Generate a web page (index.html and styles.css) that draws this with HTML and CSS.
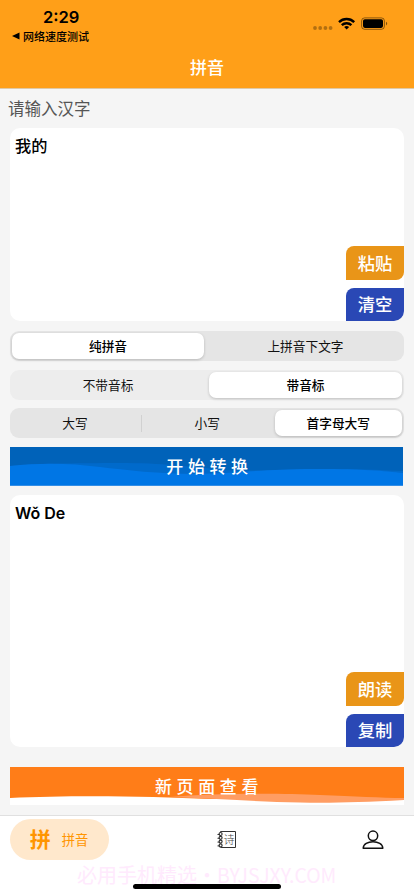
FILE: index.html
```html
<!DOCTYPE html>
<html lang="zh-CN">
<head>
<meta charset="utf-8">
<title>拼音</title>
<link rel="stylesheet" href="styles.css">
</head>
<body>
<div class="app">
  <header class="header">
    <div class="status">
      <div class="status-left">
        <div class="time">2:29</div>
        <div class="back"><svg width="8" height="8" viewBox="0 0 8 8"><path d="M0 4L7.5 .6V7.4Z"/></svg><span>网络速度测试</span></div>
      </div>
      <div class="status-right">
        <svg width="76" height="14" viewBox="0 0 76 14">
          <g fill="#000" fill-opacity=".3"><circle cx="2" cy="11" r="1.9"/><circle cx="7.2" cy="11" r="1.9"/><circle cx="12.4" cy="11" r="1.9"/><circle cx="17.6" cy="11" r="1.9"/></g>
          <g fill="none" stroke="#000" stroke-width="2.4"><path d="M26 5.100a11 11 0 0 1 15.200 0"/><path d="M28.800 8.200a7 7 0 0 1 9.600 0"/></g>
          <path d="M33.600 12.600l-2.500-2.500a3.800 3.800 0 0 1 5 0z"/>
          <rect x="48.600" y=".9" width="22.800" height="11.400" rx="3" fill="none" stroke="#000" stroke-opacity=".5" stroke-width=".9"/>
          <rect x="50" y="2.300" width="20" height="8.600" rx="1.800"/>
          <path d="M73 4.800c1.600.6 1.600 3 0 3.600z" fill-opacity=".5"/>
        </svg>
      </div>
    </div>
    <h1 class="title">拼音</h1>
  </header>

  <main class="main">
    <div class="label">请输入汉字</div>
    <section class="box box-in">
      <div class="box-text">我的</div>
      <div class="side"><div class="chip amber"><span>粘贴</span></div><div class="chip blue"><span>清空</span></div></div>
    </section>

    <div class="segments">
      <div class="seg first"><div class="opt on">纯拼音</div><div class="opt">上拼音下文字</div></div>
      <div class="seg second"><div class="opt">不带音标</div><div class="opt on">带音标</div></div>
      <div class="seg third"><div class="opt">大写</div><div class="divider"></div><div class="opt">小写</div><div class="opt on">首字母大写</div></div>
    </div>

    <div class="banner convert">
      <svg class="wave" viewBox="0 0 393 39" preserveAspectRatio="none">
        <rect width="393" height="39" fill="#0062b9"/>
        <path d="M0 19C40 16 60 16.500 100 16C150 15.500 175 19 215 23C240 25 270 22 310 22C350 21.500 370 23 393 24V39H0Z" fill="#006acb"/>
        <path d="M0 19C30 15.500 60 16 90 20C115 23 150 27 185 27C225 26.500 260 21.500 310 22C350 22 375 24 393 26V39H0Z" fill="#0076e5"/>
        <rect y="38" width="393" height="1" fill="#348ee6"/>
      </svg>
      <span>开始转换</span>
    </div>

    <section class="box box-out">
      <div class="box-text latin">Wǒ De</div>
      <div class="side"><div class="chip amber"><span>朗读</span></div><div class="chip blue"><span>复制</span></div></div>
    </section>

    <div class="banner view">
      <svg class="wave" viewBox="0 0 394 38" preserveAspectRatio="none">
        <rect width="394" height="38" fill="#fff"/>
        <path d="M0 0H394V32H200C140 29 60 28 0 31Z" fill="#ff7d18"/>
        <path d="M160 30C205 26 270 26 310 28C345 29 370 31 394 31V33C350 35.500 320 36 290 35.500C250 35 215 32 160 30Z" fill="#ff9d63"/>
      </svg>
      <span>新页面查看</span>
    </div>
  </main>

  <nav class="tabs">
    <div class="tab active"><b>拼</b><span>拼音</span></div>
    <div class="tab book">
      <svg width="20" height="20" viewBox="0 0 20 20" fill="none" stroke="#333" stroke-width="1">
        <path d="M3.500 2.500V1.500H18.500V17.500H3.500"/>
        <g stroke-width="1.200"><circle cx="3.600" cy="4" r="1.500"/><circle cx="3.600" cy="7.800" r="1.500"/><circle cx="3.600" cy="11.600" r="1.500"/><circle cx="3.600" cy="15.400" r="1.500"/></g>
        <path d="M.5 4.500H3M.5 8.300H3M.5 12.100H3M.5 15.900H3"/>
        <text x="6.600" y="13.500" font-size="11" font-weight="300" fill="#444" stroke="none">诗</text>
      </svg>
    </div>
    <div class="tab user">
      <svg width="22" height="20" viewBox="0 0 22 20" fill="none" stroke="#111" stroke-width="1.500">
        <circle cx="11" cy="5.800" r="4.700"/><path d="M1.200 18.300C1.200 9.600 20.800 9.600 20.800 18.300Z" stroke-linejoin="round"/>
      </svg>
    </div>
    <div class="watermark">必用手机精选·<span>BYJSJXY.COM</span></div>
    <div class="home"></div>
  </nav>
</div>
</body>
</html>
```
FILE: styles.css
```css
* { box-sizing: border-box; }
body { margin: 0; background: #f5f5f5; font-family: "Noto Sans CJK SC", sans-serif; color: #000; }
.app { width: 414px; height: 896px; display: flex; flex-direction: column; overflow: hidden; }
.header { height: 89px; background: #ff9f18; border-bottom: 1px solid #e0c8a4; flex: none; }
.status { height: 48px; display: flex; justify-content: space-between; }
.status-left { padding: 7px 0 0 12px; }
.time { font: 600 16.5px/21px Inter, sans-serif; padding-left: 31px; height: 21px; }
.back { display: flex; align-items: center; gap: 3px; font-size: 11px; font-weight: 500; line-height: 16px; }
.status-right { padding: 17px 25px 0 0; }
.status-right svg { display: block; }
.title { margin: 5px 0 0; font-size: 17px; font-weight: 500; line-height: 27px; text-align: center; color: #fff; }
.main { display: flex; flex-direction: column; padding: 0 10px; height: 726px; flex: none; }
.label { height: 39px; line-height: 38px; font-size: 16.5px; color: #555; margin-left: -2px; }
.box { background: #fff; border-radius: 10px; display: flex; justify-content: space-between; overflow: hidden; flex: none; }
.box-in { height: 193px; }
.box-out { height: 252px; margin-top: 9px; }
.box-text { padding: 5px 5px; font-size: 16.2px; font-weight: 500; line-height: 24px; }
.latin { font-family: Inter, sans-serif; font-size: 16px; font-weight: 600; padding-top: 6px; }
.side { display: flex; flex-direction: column; justify-content: flex-end; gap: 8px; }
.chip { width: 58px; height: 33.5px; display: flex; align-items: center; justify-content: center; border-radius: 8px 0 8px 0; color: #fff; font-size: 17.3px; font-weight: 500; }
.side .chip { border-bottom-right-radius: 8px; border-bottom-left-radius: 0; }
.chip span { line-height: 24px; }
.amber { background: #e99518; }
.blue { background: #2a48b5; }
.segments { display: flex; flex-direction: column; gap: 8.5px; margin-top: 10px; }
.seg { height: 30px; background: #e5e5e5; border-radius: 9px; display: grid; align-items: center; padding: 2px; }
.first { grid-template-columns: 192px 198px; }
.first .opt:last-child { padding-left: 5px; }
.second { grid-template-columns: 192px 193px; column-gap: 5px; background: #ededed; }
.third { grid-template-columns: 128px 1px 132px 127px; column-gap: .6px; }
.third .opt:not(.on) { padding-right: 2px; }
.opt { height: 26px; line-height: 25px; text-align: center; font-size: 12.7px; border-radius: 7px; color: #111; }
.opt.on { background: #fff; font-weight: 500; color: #000; box-shadow: 0 1px 3px rgba(0,0,0,.2); }
.divider { height: 17px; background: #d1d1d1; }
.banner { display: flex; align-items: center; justify-content: center; position: relative; color: #fff; flex: none; }
.banner span { position: relative; font-size: 17px; font-weight: 500; letter-spacing: 4.6px; line-height: 24px; }
.wave { position: absolute; inset: 0; width: 100%; height: 100%; }
.convert { width: 393px; height: 39px; margin-top: 9px; padding: 0 0 1px 6px; }
.view { height: 38px; margin-top: 20px; padding-left: 4px; }
.tabs { height: 81px; background: #fff; border-top: 1px solid #e0e0e0; display: flex; justify-content: space-between; position: relative; padding: 3px 30px 0 10px; flex: none; }
.tab { height: 41px; display: flex; align-items: center; }
.active { width: 99px; background: #ffe8cc; border-radius: 21px; color: #ff9500; justify-content: center; gap: 11px; font-size: 13.3px; }
.active b { font-size: 21px; line-height: 28px; padding-bottom: 3px; margin-left: -1px; }
.book { margin-right: 18px; }
.watermark { position: absolute; left: 77px; top: 44px; font-size: 20px; line-height: 29px; color: #ffeafd; white-space: nowrap; }
.watermark span { font-size: 19.4px; }
.home { position: absolute; left: 133px; top: 68px; width: 148px; height: 5px; border-radius: 3px; background: #000; }
```
